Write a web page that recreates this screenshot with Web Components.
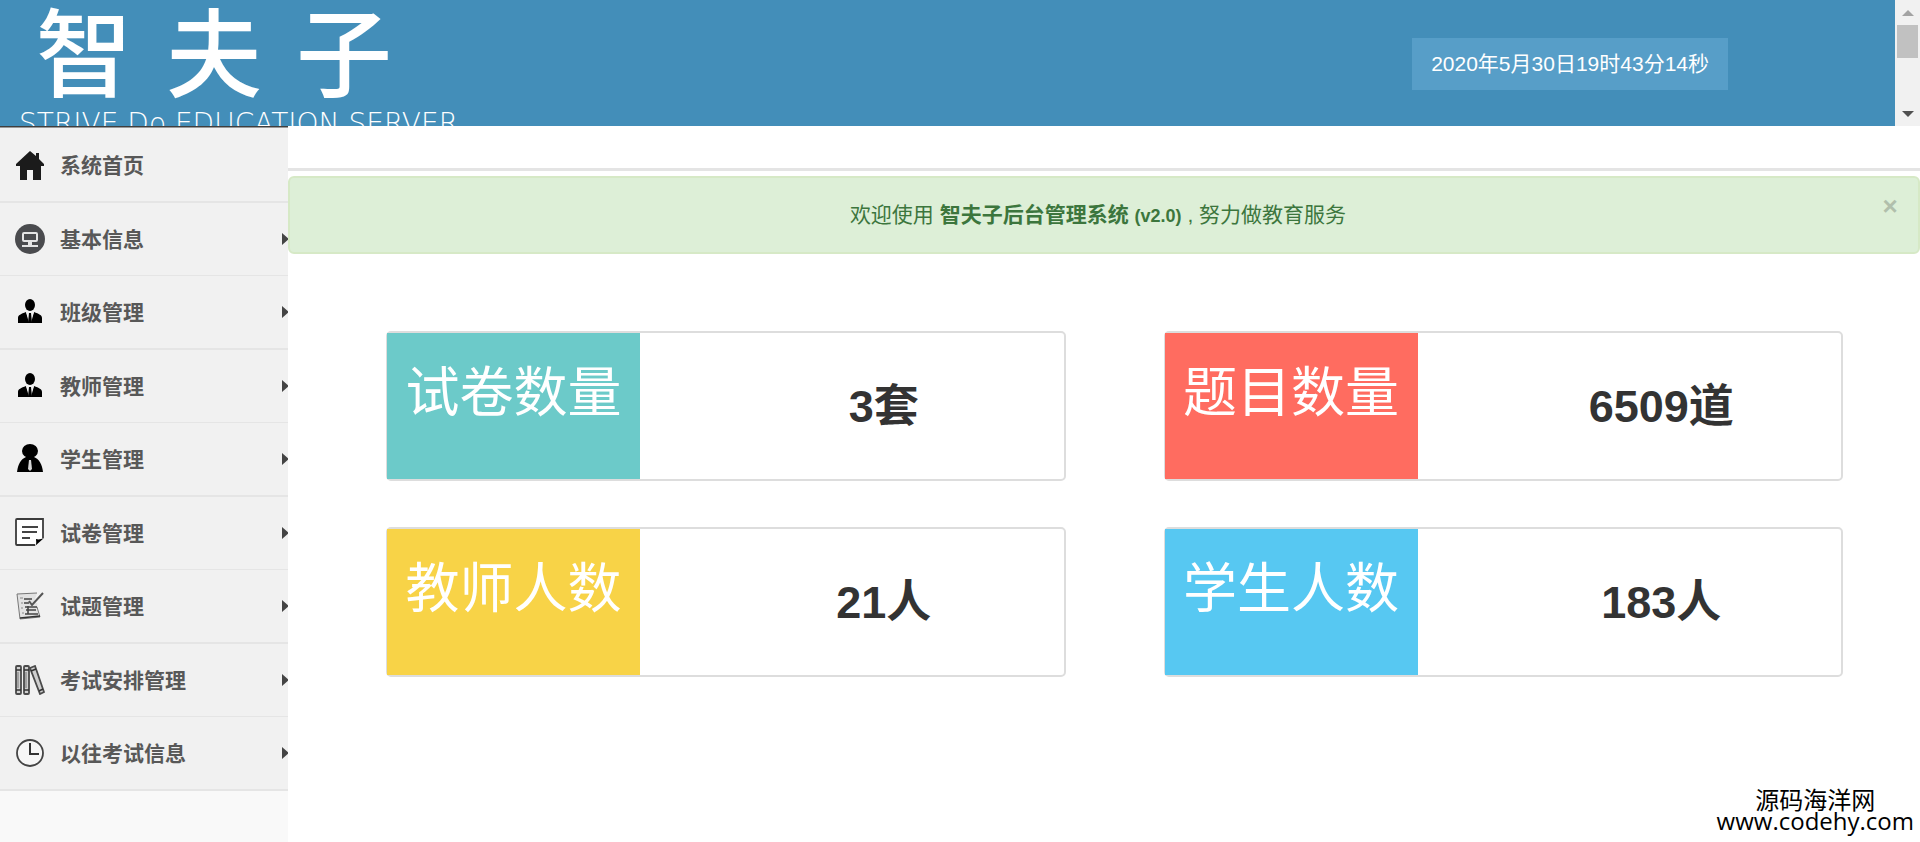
<!DOCTYPE html>
<html lang="zh-CN">
<head>
<meta charset="utf-8">
<title>智夫子后台管理系统</title>
<style>
  body {
    margin: 0;
    background: #fff;
    color: #333;
    font-family: "Liberation Sans", "Noto Sans CJK SC", sans-serif;
    font-size: 21px;
  }
</style>
</head>
<body>
<admin-layout>
  <admin-header slot="header">
    <brand-logo slot="logo"></brand-logo>
    <time slot="time" datetime="2020-05-30T19:43:14">2020年5月30日19时43分14秒</time>
  </admin-header>

  <side-menu slot="sidebar">
    <menu-item icon="home">系统首页</menu-item>
    <menu-item icon="info" expandable>基本信息</menu-item>
    <menu-item icon="person" expandable>班级管理</menu-item>
    <menu-item icon="person" expandable>教师管理</menu-item>
    <menu-item icon="student" expandable>学生管理</menu-item>
    <menu-item icon="paper" expandable>试卷管理</menu-item>
    <menu-item icon="question" expandable>试题管理</menu-item>
    <menu-item icon="books" expandable>考试安排管理</menu-item>
    <menu-item icon="clock" expandable>以往考试信息</menu-item>
  </side-menu>

  <welcome-alert>欢迎使用 <strong>智夫子后台管理系统 <small>(v2.0)</small></strong> , 努力做教育服务</welcome-alert>
  <stat-grid>
    <stat-card label="试卷数量" color="#6ccac9">3套</stat-card>
    <stat-card label="题目数量" color="#ff6c60">6509道</stat-card>
    <stat-card label="教师人数" color="#f8d347">21人</stat-card>
    <stat-card label="学生人数" color="#57c8f2">183人</stat-card>
  </stat-grid>

  <site-mark slot="mark"></site-mark>
</admin-layout>

<script>
// 30x30 icons for the side menu
const ICONS = {
  home: `
    <path fill="#1b1b1b" d="M15 1 1 14v2h4v14h7V20h6v10h8V16h3v-2l-5-5V3h-3v3z"/>`,
  info: `
    <circle cx="15" cy="15" r="15" fill="#4a4b4e"/>
    <rect x="8" y="9" width="14" height="8" rx="1" fill="none" stroke="#e4e4e4" stroke-width="2"/>
    <path d="M13 17h4v4h-4z" fill="#e4e4e4"/>
    <path d="M7 22h16" fill="none" stroke="#e4e4e4" stroke-width="2"/>`,
  person: `
    <ellipse cx="15" cy="8" rx="5" ry="6"/>
    <path d="M3 26v-5c0-3 3-4 8-6l4 11 4-11c5 2 8 3 8 6v5z"/>
    <path d="M11 15h8l-3 11h-2z" fill="#f1f1f1"/>
    <path d="M14 16h2l1 10h-4z"/>`,
  student: `
    <ellipse cx="15" cy="7" rx="8" ry="7"/>
    <path d="M2 28c1-8 4-13 9-15h8c5 2 8 7 9 15z"/>
    <path d="M14 16h2l1 9-2 2-2-2z" fill="#d8d8d8"/>`,
  paper: `
    <path d="M2 1h26v19l-8 7H2z" fill="#fff"/>
    <path d="M28 20V1H2q-1 0-1 1v24q0 1 1 1h18" fill="none" stroke="#3c3c3c" stroke-width="1.8"/>
    <path d="M20 28c2-2 1-5 1-7 3 1 5 0 8-1z"/>
    <path d="M7 9h16M7 14h15M7 20h8" stroke="#444" stroke-width="2"/>`,
  question: `
    <path d="M2 3l20-1-3 9 3 1 2 15-19 1z" fill="#e2e2e2"/>
    <path d="M22 2L2 3l3 25 20-2-3-10" fill="none" stroke="#777"/>
    <path d="M5 27l20-2" stroke="#333" stroke-width="1.5"/>
    <path d="M5 7h3M6 12h2M6 17h2M7 22h2" stroke="#888"/>
    <path d="M9 8h8M9 12h5M10 16h12M11 19h10M10 23h13M13 15v8" stroke="#444" stroke-width="1.6"/>
    <path d="M14 10l3 4L28 2" fill="none" stroke="#555" stroke-width="2"/>`,
  books: `
    <g fill="#d0d0d0" stroke="#4b4b4b" stroke-width="1.8">
      <rect x="1" y="1" width="5" height="28" rx="1"/>
      <rect x="9" y="1" width="5" height="28" rx="1"/>
      <path d="M15 3l5-2 9 26-4 2z"/>
    </g>
    <path d="M1 5h5M9 5h5M16 6l5-2M1 25h5M9 25h5M24 26l4-2" stroke="#333" stroke-width="1.5"/>
    <path d="M3 7v16M11 7v16" stroke="#777"/>`,
  clock: `
    <circle cx="15" cy="15" r="13" fill="#f6f6f6" stroke="#444" stroke-width="1.8"/>
    <path d="M15 5v11h9" fill="none" stroke="#333" stroke-width="2"/>`
};

class AdminLayout extends HTMLElement {
  constructor() {
    super();
    this.attachShadow({mode: 'open'}).innerHTML = `
      <style>
        :host { display: flex; flex-direction: column; min-height: 100vh; position: relative; }
        .body { display: flex; flex: 1; }
        main { flex: 1; min-width: 0; }
        .crumbs { height: 42px; border-bottom: 3px solid #e4e4e4; margin-bottom: 5px; }
      </style>
      <slot name="header"></slot>
      <div class="body">
        <slot name="sidebar"></slot>
        <main>
          <div class="crumbs"></div>
          <slot></slot>
        </main>
      </div>
      <slot name="mark"></slot>
    `;
  }
}

class AdminHeader extends HTMLElement {
  constructor() {
    super();
    this.attachShadow({mode: 'open'}).innerHTML = `
      <style>
        :host { display: block; }
        header { display: flex; height: 126px; overflow: hidden; background: #438eb9; }
        .clock {
          margin: 38px 167px 0 auto;
          align-self: flex-start;
          padding: 0 19px;
          background: #579ec8;
          color: #fff;
          line-height: 52px;
          white-space: nowrap;
        }
      </style>
      <header>
        <slot name="logo"></slot>
        <div class="clock"><slot name="time"></slot></div>
        <scroll-rail></scroll-rail>
      </header>
    `;
  }
}

class BrandLogo extends HTMLElement {
  constructor() {
    super();
    this.attachShadow({mode: 'open'}).innerHTML = `
      <style>
        :host { display: block; color: #fff; white-space: nowrap; }
        .name {
          display: flex;
          gap: 34px;
          padding: 8px 0 0 36px;
          font: 500 96px/96px "Liberation Sans", "Noto Sans CJK SC", sans-serif;
        }
        .sub {
          padding: 5px 0 0 19px;
          font: 28px/30px "DejaVu Sans", sans-serif;
          font-weight: 200;
        }
      </style>
      <div class="name"><span>智</span><span>夫</span><span>子</span></div>
      <div class="sub">STRIVE Do EDUCATION SERVER</div>
    `;
  }
}

class ScrollRail extends HTMLElement {
  constructor() {
    super();
    this.attachShadow({mode: 'open'}).innerHTML = `
      <style>
        :host { display: flex; flex-direction: column; width: 25px; background: #f1f1f1; }
        button { height: 25px; padding: 0; border: 0; background: none; color: #505050; }
        button:first-of-type { color: #a3a3a3; }
        svg { display: block; margin: auto; }
        .track { flex: 1; padding: 0 2px; }
        .thumb { height: 33px; background: #c1c1c1; }
      </style>
      <button type="button" aria-label="向上"><svg width="12" height="6"><path d="M0 6h12L6 0z" fill="currentColor"/></svg></button>
      <div class="track"><div class="thumb"></div></div>
      <button type="button" aria-label="向下"><svg width="12" height="6"><path d="M0 0h12L6 6z" fill="currentColor"/></svg></button>
    `;
  }
}

class SideMenu extends HTMLElement {
  constructor() {
    super();
    this.attachShadow({mode: 'open'}).innerHTML = `
      <style>
        :host { display: block; width: 288px; flex: none; background: #f9f9f9; }
        nav { border-top: 1px solid #3f3f3f; }
        nav::before { content: ""; display: block; height: 1px; background: #f1f1f1; border-top: 1px solid #999; }
        ::slotted(menu-item) { border-bottom: 1px solid #e5e5e5; }
        ::slotted(menu-item:nth-child(odd)) { border-bottom-width: 2px; }
      </style>
      <nav><slot></slot></nav>
    `;
  }
}

class MenuItem extends HTMLElement {
  constructor() {
    super();
    this.attachShadow({mode: 'open'}).innerHTML = `
      <style>
        :host { display: block; background: #f1f1f1; }
        a {
          display: flex;
          align-items: center;
          gap: 15px;
          height: 72px;
          padding-left: 15px;
          overflow: hidden;
          color: #585858;
          font-weight: bold;
          text-decoration: none;
        }
        .icon { flex: none; }
        span { padding-bottom: 2px; }
        .caret {
          margin-left: auto;
          margin-right: -1px;
          border: 6px solid transparent;
          border-left: 7px solid #444;
          border-right: 0;
        }
      </style>
      <a href="#">
        <svg class="icon" width="30" height="30" viewBox="0 0 30 30" aria-hidden="true">${ICONS[this.getAttribute('icon')]}</svg>
        <span><slot></slot></span>
        ${this.hasAttribute('expandable') ? '<b class="caret"></b>' : ''}
      </a>
    `;
  }
}

class WelcomeAlert extends HTMLElement {
  constructor() {
    super();
    this.attachShadow({mode: 'open'}).innerHTML = `
      <style>
        :host {
          display: flex;
          height: 74px;
          border: 2px solid #d6e9c6;
          border-radius: 6px;
          background: #ddefd7;
          color: #3c763d;
        }
        p { flex: 1; margin: 0; padding-left: 44px; line-height: 74px; text-align: center; }
        button {
          align-self: flex-start;
          margin-top: 12px;
          width: 56px;
          padding: 0;
          border: 0;
          background: none;
          color: #b1bfac;
          font: bold 26px/32px "Liberation Sans", sans-serif;
        }
        ::slotted(strong) { font-weight: bold; }
      </style>
      <p><slot></slot></p>
      <button type="button" aria-label="关闭">×</button>
    `;
    this.querySelector('small').style.fontSize = '18px';
  }
}

class StatGrid extends HTMLElement {
  constructor() {
    super();
    this.attachShadow({mode: 'open'}).innerHTML = `
      <style>
        :host {
          display: grid;
          grid-template-columns: 1fr 1fr;
          gap: 46px 98px;
          padding: 77px 77px 0 98px;
        }
      </style>
      <slot></slot>
    `;
  }
}

class StatCard extends HTMLElement {
  constructor() {
    super();
    this.attachShadow({mode: 'open'}).innerHTML = `
      <style>
        :host {
          display: flex;
          height: 146px;
          border: 2px solid #ddd;
          border-left-width: 1px;
          border-radius: 5px;
          background: #fff;
        }
        .label {
          width: 253px;
          flex: none;
          background: ${this.getAttribute('color')};
          color: #fff;
          font-size: 54px;
          line-height: 120px;
          text-align: center;
        }
        .value {
          flex: 1;
          padding-left: 64px;
          font-size: 45px;
          font-weight: bold;
          line-height: 148px;
          text-align: center;
        }
      </style>
      <div class="label">${this.getAttribute('label')}</div>
      <div class="value"><slot></slot></div>
    `;
  }
}

class SiteMark extends HTMLElement {
  constructor() {
    super();
    this.attachShadow({mode: 'open'}).innerHTML = `
      <style>
        :host {
          position: absolute;
          right: 6px;
          bottom: 11px;
          color: #000;
          font: 24px/21px "Open Sans", "Noto Sans CJK SC", sans-serif;
          text-align: center;
        }
        div { white-space: nowrap; }
      </style>
      <div>源码海洋网</div>
      <div>www.codehy.com</div>
    `;
  }
}

customElements.define('admin-layout', AdminLayout);
customElements.define('admin-header', AdminHeader);
customElements.define('brand-logo', BrandLogo);
customElements.define('scroll-rail', ScrollRail);
customElements.define('side-menu', SideMenu);
customElements.define('menu-item', MenuItem);
customElements.define('welcome-alert', WelcomeAlert);
customElements.define('stat-grid', StatGrid);
customElements.define('stat-card', StatCard);
customElements.define('site-mark', SiteMark);
</script>
</body>
</html>
